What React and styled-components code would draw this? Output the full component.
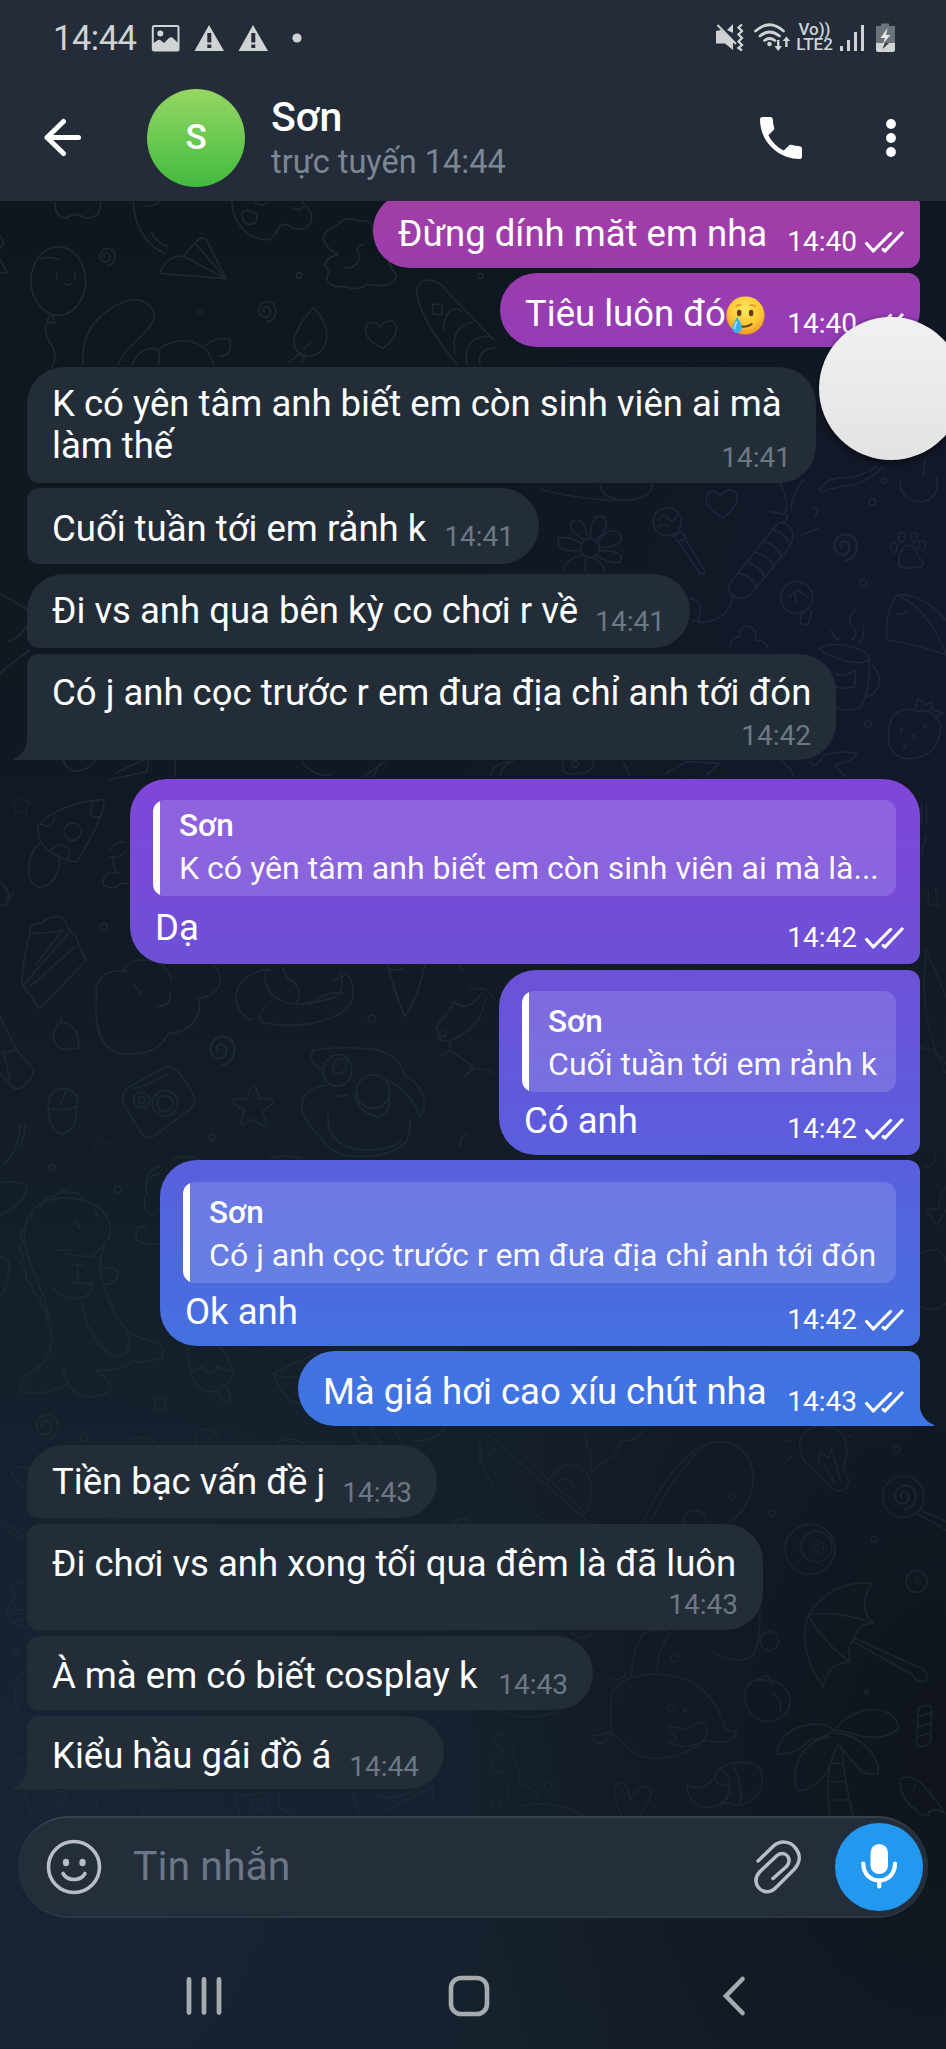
import React from "react";
import styled, { createGlobalStyle, css } from "styled-components";

const messages = [
  { id: 1, out: true, text: "Đừng dính măt em nha", time: "14:40", width: 547, height: 75, gap: -8, pad: 20, foot: 10, radius: "37px 12px 12px 37px" },
  { id: 2, out: true, text: "Tiêu luôn đó", emoji: true, time: "14:40", width: 420, height: 74, gap: 5, pad: 20, foot: 7, radius: "37px 12px 37px 37px" },
  { id: 3, text: "K có yên tâm anh biết em còn sinh viên ai mà làm thế", time: "14:41", width: 789, height: 116, gap: 20, pad: 16, foot: 9, radius: "37px 37px 37px 12px" },
  { id: 4, text: "Cuối tuần tới em rảnh k", time: "14:41", width: 512, height: 76, gap: 5, pad: 20, foot: 11, radius: "12px 38px 38px 12px" },
  { id: 5, text: "Đi vs anh qua bên kỳ co chơi r về", time: "14:41", width: 663, height: 74, gap: 10, pad: 16, foot: 10, radius: "37px 37px 37px 12px" },
  { id: 6, text: "Có j anh cọc trước r em đưa địa chỉ anh tới đón", time: "14:42", width: 809, height: 106, gap: 6, pad: 18, foot: 8, radius: "12px 37px 37px 0", tail: true },
  { id: 7, out: true, text: "Dạ", reply: "K có yên tâm anh biết em còn sinh viên ai mà là...", time: "14:42", width: 790, height: 185, gap: 19, pad: 11, foot: 10, radius: "37px 37px 12px 37px", replyTop: 21, replyHeight: 96, replyPad: 5 },
  { id: 8, out: true, text: "Có anh", reply: "Cuối tuần tới em rảnh k", time: "14:42", width: 421, height: 185, gap: 6, pad: 8, foot: 10, radius: "37px 12px 12px 37px", replyTop: 21, replyHeight: 101, replyPad: 10 },
  { id: 9, out: true, text: "Ok anh", reply: "Có j anh cọc trước r em đưa địa chỉ anh tới đón", time: "14:42", width: 760, height: 186, gap: 5, pad: 8, foot: 10, radius: "37px 12px 12px 37px", replyTop: 22, replyHeight: 101, replyPad: 10 },
  { id: 10, out: true, text: "Mà giá hơi cao xíu chút nha", time: "14:43", width: 622, height: 75, gap: 5, pad: 20, foot: 8, radius: "37px 12px 0 37px", tail: true },
  { id: 11, text: "Tiền bạc vấn đề j", time: "14:43", width: 410, height: 73, gap: 19, pad: 16, foot: 9, radius: "37px 37px 37px 12px" },
  { id: 12, text: "Đi chơi vs anh xong tối qua đêm là đã luôn", time: "14:43", width: 736, height: 106, gap: 6, pad: 19, foot: 9, radius: "12px 37px 37px 12px" },
  { id: 13, text: "À mà em có biết cosplay k", time: "14:43", width: 566, height: 74, gap: 6, pad: 19, foot: 9, radius: "12px 37px 37px 12px" },
  { id: 14, text: "Kiểu hầu gái đồ á", time: "14:44", width: 417, height: 73, gap: 6, pad: 19, foot: 6, radius: "12px 37px 37px 0", tail: true },
];

const Spiral = ({ x, y, r }) => (
  <path
    transform={`translate(${x} ${y}) scale(${r / 30})`}
    d="M-3 3C-12-3-4-14 5-11C18-6 15 14 1 17C-18 19-24-3-14-17C-2-33 25-28 29-5C31 14 19 28 4 30"
  />
);

const Heart = ({ x, y, s = 1 }) => (
  <path
    transform={`translate(${x} ${y}) scale(${s})`}
    d="M5 45C-25 30-50 10-46-15C-40-38-14-38-4-18C8-40 42-46 46-18C48 8 25 32 5 45Z"
  />
);

const Star = ({ x, y, s = 1 }) => (
  <path
    transform={`translate(${x} ${y}) scale(${s})`}
    d="M-8-60Q0-72 8-60L20-25L58-24Q68-20 58-8L30 15L42 55Q40 66 28 60L0 40L-32 58Q-42 60-38 46L-28 12L-60-8Q-68-22-55-24L-20-25Z"
  />
);

const Doodles = () => (
  <Wallpaper viewBox="0 201 946 1848" fill="none" stroke="#1d2932" strokeWidth="5" strokeLinecap="round" strokeLinejoin="round">
    {/* top strip */}
    <g transform="translate(0 196) scale(.3333)">
      <path d="M165 20Q165 68 200 65Q230 45 250 65Q302 72 302 20" />
      <path d="M400 20C403 90 440 150 495 172M435 30Q470 30 480 15M455 110Q470 140 500 150" />
      <path d="M480 232Q495 180 550 180L595 130Q605 120 620 133L678 248L480 232M550 180L678 248M588 145L678 248" />
      <ellipse cx="175" cy="255" rx="82" ry="103" />
      <path d="M150 358L140 380H165L158 358M137 385Q133 425 160 455Q172 490 155 512M170 232v18M225 228v22M190 262q15 10 25 0M120 190q30-12 55 0" />
      <Spiral x={318} y={182} r={28} />
      <Spiral x={797} y={345} r={32} />
      <path d="M695 15C700 90 755 138 810 130C840 112 825 85 860 85C900 115 940 95 935 55Q925 35 905 18" />
      <path d="M725 50Q745 35 770 55Q775 85 750 85Q725 85 725 50M765 20q25 15 35 0M880 35q20 15 30-5" />
      <path d="M970 130C975 90 1010 100 1020 78C1050 55 1070 80 1090 75Q1115 70 1120 110M970 130Q985 165 1015 175C960 190 975 215 990 225C960 260 1010 280 1030 270C1070 285 1090 275 1100 265Q1180 280 1190 240L1165 200M1035 215Q1070 220 1080 180Q1060 150 1090 145" />
      <path d="M250 505C240 420 290 345 380 315C440 300 470 340 460 375C440 420 375 450 355 505M395 505Q430 440 475 465Q480 490 475 505M475 462C520 420 620 420 640 505M615 450Q650 420 690 430Q700 480 655 482" />
      <path d="M940 335C995 390 990 450 950 475C900 500 865 450 890 410Q905 370 940 335M905 470L865 500M910 460L930 440M915 475L905 505" />
      <Heart x={1143} y={412} />
      <path d="M1370 505Q1260 370 1250 290C1250 240 1310 240 1345 290L1480 430M1298 325h28v30h-28zM1330 400Q1340 320 1385 345M1365 470Q1350 390 1420 378M1400 505Q1390 420 1470 420M1440 505Q1430 460 1490 455" />
      <path d="M0 120Q20 140 0 155M0 190L22 230H0" />
      <circle cx="600" cy="347" r="8" />
      <circle cx="897" cy="238" r="8" />
      <circle cx="1442" cy="240" r="8" />
    </g>

    {/* beside the incoming bubbles */}
    <g transform="translate(460 460) scale(.3333)" stroke="#1c2737">
      <Heart x={785} y={127} />
      <circle cx="622" cy="185" r="42" />
      <path d="M595 180q15-25 30-5t30-15M595 200q20-15 30 0M640 228L665 215L680 235L652 245ZM655 245L722 342Q735 348 733 330L675 236" />
      <circle cx="390" cy="265" r="28" />
      <path d="M375 240C310 210 330 165 365 185Q380 205 383 237M392 237C390 180 410 155 435 175Q450 205 405 243M412 250C440 200 480 205 485 235Q480 262 418 263M418 272C470 270 495 285 480 305Q450 315 410 285M402 292Q440 320 430 338M380 292Q370 330 380 340M366 285Q310 300 310 335M362 270C300 280 290 260 295 235Q320 225 368 252" />
      <path d="M810 370L945 200Q970 170 995 210Q1005 230 990 260L870 405Q840 425 815 405Q800 390 810 370M835 338Q880 350 890 385M860 308Q905 320 912 350M885 278Q930 288 938 318M910 245Q955 255 962 290M940 210Q980 220 988 255" />
      <path d="M818 408C810 470 750 500 695 480M690 415Q735 420 715 480" />
      <Spiral x={1150} y={260} r={42} />
      <path d="M1320 320Q1310 300 1325 270Q1345 240 1368 270Q1370 290 1390 305Q1390 325 1370 320Q1345 330 1320 320" />
      <ellipse cx="1302" cy="262" rx="10" ry="15" />
      <ellipse cx="1325" cy="232" rx="10" ry="15" />
      <ellipse cx="1362" cy="232" rx="10" ry="15" />
      <ellipse cx="1386" cy="256" rx="10" ry="15" />
      <circle cx="1010" cy="412" r="48" />
      <path d="M985 410L1015 390L1045 415M1005 400L1010 430M1025 460L1020 490L1045 495L1055 455" />
      <path d="M1458 480Q1380 395 1310 405Q1275 450 1280 540Q1380 555 1458 585M1310 405Q1400 440 1458 580M1310 460q15 12 30-5" />
      <path d="M1080 565Q1110 545 1170 560Q1230 575 1228 600Q1190 620 1120 590Q1085 580 1080 565M1228 600Q1230 700 1200 745Q1160 755 1130 745M1235 615Q1265 640 1255 680Q1240 710 1220 710M1125 640Q1150 655 1185 630V680Q1150 690 1125 680M1175 540Q1200 520 1175 495Q1160 470 1185 450M1115 510Q1120 535 1140 540M1210 500Q1215 530 1200 550" />
      <path d="M810 560Q815 530 840 530Q840 490 870 500Q895 515 885 540Q920 540 925 570" />
      <path d="M1290 790C1300 750 1340 740 1370 755C1420 740 1450 790 1440 820C1430 880 1380 900 1330 895C1280 880 1280 830 1290 790M1365 750L1375 715L1395 735L1415 725L1415 750L1450 760L1425 775" />
      <circle cx="1325" cy="810" r="4" /><circle cx="1360" cy="830" r="4" /><circle cx="1395" cy="800" r="4" /><circle cx="1335" cy="860" r="4" />
      <path d="M955 60Q990 120 975 160M1030 60Q990 110 995 150M930 155L985 165L970 195M1060 140l15 10l-10 20M1025 225l50-20M1080 90Q1090 60 1130 55Q1200 55 1250 20M1085 95Q1130 80 1180 75Q1230 60 1270 20M1320 60C1320 120 1370 135 1405 120Q1440 100 1430 50M1390 50l5-50M245 90Q420 130 520 118Q580 110 575 70M420 75q10 40 50 40" />
      <path d="M90 945Q100 910 150 905M120 945Q130 910 160 905M310 905Q300 950 340 940Q400 945 400 905M490 905l20 40M620 940L680 905L780 910L740 945M965 905Q1000 930 1000 950M1050 905Q1070 930 1090 885Q1150 870 1190 880Q1190 900 1125 915L1155 950M1385 1030V1090M1400 1030V1090M1400 1125L1385 1180" />
      <circle cx="345" cy="912" r="10" />
      <circle cx="1237" cy="126" r="10" />
      <circle cx="1272" cy="62" r="8" />
      <circle cx="1210" cy="367" r="10" />
      <circle cx="1224" cy="793" r="10" />
    </g>

    {/* left column, middle */}
    <g transform="translate(0 760) scale(.3333)">
      <path d="M0 300Q60 250 90 230M25 205Q60 190 80 160M0 60L50 90L95 115" transform="translate(0 -560)" />
      <path d="M190 0Q200 40 240 32Q280 20 285 0M325 60L440 35L445 5M345 40L430 0M525 0V50M905 5Q940 50 990 45M1090 50L1155 5M1120 50L1140 10" />
      <Star x={62} y={135} s={0.48} />
      <path d="M120 190Q180 130 310 118Q325 150 230 305Q210 310 150 275Q110 250 115 195M120 190Q155 215 165 170M280 125Q260 180 300 170M155 270Q180 240 210 270L205 300M120 248C75 290 75 370 115 382C165 380 180 330 178 290" />
      <circle cx="218" cy="215" r="26" />
      <path d="M330 270Q345 245 375 245M330 290Q355 300 380 270M340 290Q335 320 355 340Q305 330 310 375Q340 395 360 370H385M0 365Q30 390 25 420Q20 440 0 435M20 415L42 400" />
      <path d="M90 520Q85 490 125 490Q140 470 180 470Q200 480 205 510Q235 530 235 555L260 600L118 745L65 670Q70 590 90 520M90 520Q150 520 190 510M205 520L70 675M225 560L90 680M180 520L110 610" />
      <path d="M385 635C310 620 280 670 290 710C280 820 310 890 400 882C460 880 490 850 505 820C560 820 610 780 595 715C660 710 680 650 640 618M370 635Q380 600 430 600Q500 600 515 660M400 670L425 705M510 700Q515 740 465 740" />
      <path d="M745 650C690 680 700 760 755 780M745 650Q780 625 810 630M795 640C790 720 870 740 920 730C980 720 1050 720 1020 640M850 625Q860 660 880 665Q910 700 890 725M795 740Q760 790 800 790C900 810 1060 780 1060 700Q1060 650 1030 640M930 735Q980 690 1030 700M1000 660l30-10" />
      <path d="M1165 615Q1180 690 1215 770Q1250 720 1275 615M1165 625Q1190 635 1205 625M1380 620l10 15M1310 810C1310 780 1350 770 1360 725L1390 740Q1430 730 1440 705M1310 830Q1330 850 1355 840Q1420 810 1440 770M1350 850V870L1420 920L1395 950M1345 875L1318 890" />
      <circle cx="1328" cy="820" r="10" />
      <path d="M160 830Q165 780 195 790Q240 800 235 865Q165 880 160 830M180 790L185 772" />
      <Spiral x={660} y={870} r={45} />
      <Star x={760} y={1040} s={0.95} />
      <Star x={303} y={1155} s={0.45} />
      <path d="M380 985L490 925Q510 915 530 930Q575 980 585 1025Q580 1045 560 1055L460 1130Q440 1140 420 1115L370 1030Q365 1000 380 985M400 985L440 975Q470 960 500 945" />
      <circle cx="425" cy="1020" r="24" /><circle cx="425" cy="1020" r="10" />
      <circle cx="495" cy="1030" r="38" /><circle cx="495" cy="1030" r="24" />
      <path d="M145 1040C140 990 190 970 225 1000Q240 1030 228 1045Q235 1110 185 1122Q145 1110 145 1045Q190 1055 230 1040M200 990L180 1035" />
      <path d="M940 870Q1010 860 1090 865Q1200 870 1215 950Q1250 960 1265 1000Q1285 1050 1255 1070M940 870Q920 910 970 930C970 1000 1060 990 1055 925C1050 860 970 880 970 930M1000 920Q1005 890 1040 900Q1040 950 1000 940ZM975 975Q900 990 905 1050Q930 1110 970 1140Q1000 1190 1080 1190Q1170 1190 1220 1145Q1230 1110 1230 1080M985 1050Q970 1160 1090 1170Q1180 1170 1205 1140M1060 995Q1080 1070 1140 1070Q1180 1050 1165 1000M1160 960Q1230 990 1260 1070M1005 1010L1045 1005" />
      <circle cx="1120" cy="995" r="50" />
      <path d="M0 770L50 870L100 925Q100 960 60 985L40 985L0 940M10 870L30 960M0 880L45 870M60 1090Q60 1170 10 1215M75 1090Q75 1130 60 1160M440 1285Q430 1230 480 1220M520 1200Q550 1180 600 1200M810 1195Q850 1180 900 1195M1380 1160Q1380 1130 1400 1120M0 1270Q40 1260 80 1275Q80 1330 0 1365" />
      <circle cx="312" cy="500" r="10" /><circle cx="1116" cy="776" r="11" /><circle cx="635" cy="1133" r="9" /><circle cx="157" cy="1222" r="9" />
    </g>

    {/* dinosaur corner */}
    <g transform="translate(0 1150) scale(.3333)">
      <path d="M75 230C90 160 150 140 210 145C290 150 340 200 330 250C320 290 290 300 280 320Q230 320 195 310M170 300L210 300M75 230C60 330 150 420 155 570M330 260Q300 290 300 360C320 460 360 530 400 555L480 585Q495 600 485 625Q430 640 400 635Q360 665 290 660Q330 690 335 720Q300 745 250 740Q200 720 190 655M155 570Q150 640 85 670Q50 700 65 725Q130 740 195 705M245 455C260 560 320 620 360 620Q400 600 380 540" />
      <path d="M75 230q-25 20-5 45q-20 20 0 45q-15 25 10 45q-10 25 15 40q0 30 25 35q0 25 20 45q-5 25 10 40M95 200q0-30 30-35q5-30 40-25q20-25 45-10q30-10 40 20" />
      <path d="M218 345h35M233 345V400M218 400H275Q275 440 240 445Q180 450 160 415M300 360Q340 340 355 370Q345 410 310 400" />
      <path d="M230 215l8 22M285 180l8 18" strokeWidth="7" />
      <path d="M440 130Q430 80 480 70M440 130Q420 180 460 195M440 230Q400 220 410 270Q440 290 475 280M0 320Q35 320 25 370Q20 420 0 440" />
      <path d="M565 595C560 690 600 730 640 725C680 710 710 680 695 660Q690 620 660 592M580 665Q620 640 610 655Q640 690 650 650L690 665M650 725L670 755Q695 760 690 740L680 710" />
      <path d="M820 670L945 612M820 670Q850 750 890 760M820 670Q850 690 890 680M1060 830Q1060 880 1100 880M1110 830L1140 880M1180 840L1210 880M1240 870Q1310 880 1335 830M1440 870V940" />
      <Spiral x={135} y={830} r={40} />
      <path d="M380 880Q430 845 470 880M590 880C570 830 660 820 655 880M830 880Q870 855 910 880M35 960Q60 940 85 960M35 965Q40 1000 75 1005M0 1120L55 1170L65 1155L25 1125M320 1115Q340 1100 370 1115M1360 1120Q1390 1095 1420 1120M75 1300Q30 1290 35 1320Q60 1330 25 1370Q5 1420 90 1435M35 1380H75M25 1415L80 1405" />
      <circle cx="481" cy="762" r="17" /><circle cx="253" cy="862" r="12" /><circle cx="353" cy="118" r="10" /><circle cx="157" cy="52" r="9" />
      <path d="M80 1560Q20 1600 60 1690M50 1845L100 2020M110 1915L185 1925L205 1930L165 1990M35 1840Q50 1825 75 1825M300 1930Q280 1960 300 1995M310 1930l10 20M420 1980L480 1930M430 1960V2000M705 1930Q715 1980 720 2000M705 1935H760M840 1930L835 1970L880 1995M1060 1925Q1060 1970 1080 1990M1120 1930Q1170 1960 1240 1920M1140 1990L1300 1910V1960" />
      <circle cx="780" cy="1955" r="26" /><circle cx="780" cy="1955" r="12" /><circle cx="160" cy="1960" r="14" /><circle cx="50" cy="1508" r="8" />
    </g>

    {/* right column, lower half */}
    <g transform="translate(470 1150) scale(.3333)" stroke="#1a252e">
      <path d="M30 870Q20 1000 180 1120M50 850L350 1110M90 850L345 1090M25 880Q60 990 230 1120M230 1000Q270 930 330 950Q390 990 345 1090M260 1000Q290 970 310 1010M350 850Q340 880 360 900L365 970M365 970Q380 940 400 940Q450 910 450 870Q500 880 520 840" />
      <circle cx="62" cy="900" r="14" />
      <path d="M520 1115C590 960 680 870 760 875C850 890 870 990 830 1060Q810 1100 770 1120M545 1110Q600 990 680 910M640 1120Q640 1080 675 1082Q710 1085 710 1120" />
      <circle cx="787" cy="1040" r="10" />
      <path d="M1000 930C970 860 1010 825 1060 830Q1130 830 1130 900Q1130 930 1120 950L1138 1000Q1120 1035 1085 1015Q1050 980 1000 930M1045 940L1050 905L1075 925L1085 895L1110 990M1060 940L1095 1000M950 930l18-10M945 870l20 5M1130 860l20-5" />
      <circle cx="1300" cy="1040" r="62" /><Spiral x={1300} y={1040} r={38} />
      <path d="M1340 1090L1428 1140M1355 1080L1428 1115" />
      <circle cx="1020" cy="1198" r="75" /><circle cx="1040" cy="1190" r="46" /><Spiral x={1040} y={1192} r={22} />
      <circle cx="1340" cy="1295" r="32" /><Spiral x={1342} y={1293} r={12} />
      <circle cx="1280" cy="898" r="11" /><circle cx="905" cy="1090" r="9" /><circle cx="1212" cy="1168" r="9" />
      <path d="M1360 50Q1400 50 1395 10M1428 110Q1400 150 1410 175L1370 180M1370 180L1400 225L1428 180M1350 310Q1420 280 1428 340M1350 470Q1400 490 1428 460" />
      <path d="M1395-790l10 60l-30-10v-40M1370-600L1428-460M1370-600Q1340-400 1428-230M1345-310Q1400-300 1428-260M0-480Q50-500 75-450M30-400L50-460M0-240Q40-250 75-230" />
    </g>

    {/* umbrella, fish, palm tree */}
    <g transform="translate(470 1560) scale(.3333)" stroke="#1a252d">
      <path d="M1205 70Q1080 60 1015 165Q980 270 1060 380Q1070 310 1140 305Q1130 250 1155 235Q1160 190 1210 190Q1160 140 1205 70M1015 165Q1100 150 1210 190M1015 165Q1060 250 1140 305M1155 235L1330 315Q1380 330 1370 360Q1340 375 1330 345L1150 245" />
      <path d="M430 390C480 330 600 330 680 375Q750 430 765 510L800 515Q790 550 740 545Q720 540 700 545C640 590 540 620 480 570Q430 520 425 520L400 550Q370 550 360 525Q400 530 425 510Q415 440 430 390M485 345Q490 260 520 220Q560 200 600 220Q560 270 560 345M420 350Q450 370 470 340M595 500Q620 500 650 510Q690 480 705 490Q720 530 690 550Q620 570 595 545Q640 545 600 510" />
      <circle cx="604" cy="442" r="10" /><circle cx="645" cy="450" r="5" /><circle cx="615" cy="294" r="12" />
      <path d="M730 275Q800 320 850 285Q870 240 870 150M300 215Q340 250 365 220M90 450Q170 490 260 455" />
      <circle cx="898" cy="243" r="28" />
      <path d="M825 420C820 370 850 355 885 360C950 360 970 410 955 450C930 490 880 490 860 475Q830 460 825 420M835 370L890 345L910 375M905 400Q940 420 930 455" />
      <path d="M920 580C930 500 1040 470 1095 510Q1050 540 1020 540Q970 590 920 580M1095 510C1150 430 1280 430 1285 505Q1250 540 1180 530Q1130 515 1095 510M1095 520C1170 520 1230 590 1225 640Q1190 650 1165 625Q1130 580 1100 550M1080 530C1000 540 960 620 980 690Q1010 700 1060 650Q1080 620 1100 560M1100 560Q1060 640 1080 765M1115 560Q1125 680 1150 765M1080 665H1120M1078 720H1135M1080 610H1115" />
      <path d="M1345 445Q1360 430 1385 440L1382 545Q1365 570 1340 555ZM1343 470L1380 460M1343 500L1380 490M1343 530L1380 520M1290 660Q1310 640 1350 665Q1400 720 1425 760Q1390 740 1375 760L1380 800M1290 660Q1290 720 1340 750Q1350 770 1375 765M1325 690q10 5 10-15" />
      <path d="M75 550C50 530 90 520 110 525Q140 540 130 600Q160 640 145 675Q200 680 205 720M75 550Q110 570 90 590Q60 590 62 620Q70 640 105 640Q120 680 108 725M108 760Q200 700 340 765" />
      <circle cx="235" cy="677" r="11" /><circle cx="78" cy="732" r="16" />
      <path d="M455 765Q420 690 440 675Q470 650 480 720Q510 660 545 690Q540 730 510 765M650 675C655 760 740 760 785 700Q780 670 765 675Q740 680 735 650Q700 700 650 675M735 650C750 600 830 600 865 620C895 660 870 740 790 735Q760 720 750 740M790 615Q820 670 810 735M750 625Q800 660 765 720" />
      <circle cx="1190" cy="397" r="6" />
    </g>
  </Wallpaper>
);

const Ticks = () => (
  <svg width="39" height="22" viewBox="0 0 39 22" fill="none" stroke="#fff" strokeWidth="3.2" strokeLinecap="round" strokeLinejoin="round">
    <path d="M1.6 12.5L8.3 20L25.5 2.5" />
    <path d="M18.2 18.5L20 20L37 2" />
  </svg>
);

const TearEmoji = () => (
  <Emoji viewBox="0 0 38 38">
    <defs>
      <radialGradient id="face" cx="50%" cy="35%" r="65%">
        <stop offset="0" stopColor="#ffe95c" />
        <stop offset=".65" stopColor="#fcc632" />
        <stop offset="1" stopColor="#ee9426" />
      </radialGradient>
    </defs>
    <circle cx="19" cy="19" r="18.6" fill="url(#face)" />
    <path d="M9.5 10.5Q12 8 15 9M23 9Q26 8 29 10.5" fill="none" stroke="#e59a2b" strokeWidth="1.6" />
    <ellipse cx="12.8" cy="16.5" rx="2.2" ry="3.2" fill="#5f3c15" />
    <ellipse cx="24.5" cy="16.5" rx="2.2" ry="3.2" fill="#5f3c15" />
    <path d="M12 28.5Q18 32 25 27.5" fill="none" stroke="#6a4114" strokeWidth="2" strokeLinecap="round" />
    <path d="M11 20.5Q16 28 15.5 31.5Q14.5 36 10.5 36Q6.3 35.5 6 31.5Q6.5 27 11 20.5Z" fill="#37b4ea" />
    <path d="M10.5 25Q8 29 8.6 32" fill="none" stroke="#a9e6fb" strokeWidth="1.6" />
  </Emoji>
);

const Message = ({ item }) => (
  <Bubble $out={item.out} $width={item.width} $height={item.height} $gap={item.gap} $radius={item.radius}>
    <Content>
      {item.reply && (
        <Reply $top={item.replyTop} $height={item.replyHeight} $pad={item.replyPad}>
          <ReplyName>Sơn</ReplyName>
          <ReplyText>{item.reply}</ReplyText>
        </Reply>
      )}
      <Text $pad={item.pad}>
        {item.text}
        {item.emoji && <TearEmoji />}
      </Text>
    </Content>
    <Stamp $out={item.out} $foot={item.foot}>
      {item.time}
      {item.out && <Ticks />}
    </Stamp>
    {item.tail && (
      <Tail $out={item.out} viewBox="0 0 16 28">
        <path d="M16 0C16 14 12 22 1 27Q0 28 2 28H16Z" />
      </Tail>
    )}
  </Bubble>
);

const App = () => {
  return (
    <Screen>
      <GlobalStyle />
      <Doodles />
      <Header>
        <StatusBar>
          <Clock>14:44</Clock>
          <svg width="152" height="30" viewBox="151 22 152 30" fill="#cfd3d4">
            <path fillRule="evenodd" d="M154 24H177Q179.5 24 179.5 26.5V48Q179.5 50.5 177 50.5H154Q151.8 50.5 151.8 48V26.5Q151.8 24 154 24ZM153.8 26V42L158 39Q159.5 38.2 161 39.5L164 42L169 37Q171 35.4 173 37L177.5 41.5V26Z" />
            <circle cx="160.3" cy="32.5" r="3" />
            <path fillRule="evenodd" d="M209 24L224 50H194.5ZM207.3 32V41.5H211.3V32ZM207.3 43.5V47H211.3V43.5Z" />
            <path fillRule="evenodd" d="M253 24L268 50H238.5ZM251.3 32V41.5H255.3V32ZM251.3 43.5V47H255.3V43.5Z" />
            <circle cx="297" cy="37" r="4.6" />
          </svg>
          <Spacer />
          <svg width="78" height="32" viewBox="716 22 78 32" fill="#cfd3d4">
            <path d="M717 31L722 30L734 41V50L726 43.5H717ZM728 30L734 24V33Z" />
            <path d="M718.5 25L737 44" stroke="#cfd3d4" strokeWidth="2" />
            <path d="M743 24.5L739.5 27.5L743 31L739.5 34.5L743 38L739.5 41.5L743 45L739.5 48L743 50.5" fill="none" stroke="#cfd3d4" strokeWidth="2.3" />
            <g fill="none" stroke="#cfd3d4" strokeWidth="2.7" strokeLinecap="round">
              <path d="M756.5 31Q770.5 18.5 784.5 31M761 36Q770.5 28 780.5 36M765.5 40.5Q770.5 36.5 776 40.5" />
            </g>
            <circle cx="770.5" cy="44" r="2.3" />
            <path d="M778 40h2.4v6h2.6l-3.8 5l-3.8-5H778zM786.2 47h2.4v-6h2.6l-3.8-4.5l-3.8 4.5h2.6z" />
          </svg>
          <Volte>
            <span>Vo))</span>
            <span>LTE2</span>
          </Volte>
          <svg width="56" height="32" viewBox="839 22 56 32" fill="#cfd3d4">
            <rect x="840" y="46" width="3" height="5" />
            <rect x="847" y="40" width="3" height="11" />
            <rect x="854" y="32" width="3" height="19" />
            <rect x="861" y="25" width="3" height="26" />
            <path d="M881 23.5H889V26H895V43H876V26H881Z" fill="#6b7279" />
            <path d="M876 43H895V50Q895 52 893 52H878Q876 52 876 50Z" />
            <path d="M887.5 28L880.5 38H885L883 43.5L890.5 35H886Z" fill="#e6e8e9" />
            <path d="M884.8 43H889L882.5 49Z" fill="#30373f" />
          </svg>
        </StatusBar>
        <TitleBar>
          <svg width="38" height="40" viewBox="0 0 38 40" fill="none" stroke="#fff" strokeWidth="5" strokeLinecap="round" strokeLinejoin="round">
            <path d="M35.5 19.5H4M20.5 3.5L4 19.5L20.5 35.5" />
          </svg>
          <Avatar>S</Avatar>
          <Peer>
            <PeerName>Sơn</PeerName>
            <PeerStatus>trực tuyến 14:44</PeerStatus>
          </Peer>
          <svg width="56" height="56" viewBox="0 0 24 24" fill="#fff">
            <path d="M6.62 10.79c1.44 2.83 3.76 5.14 6.59 6.59l2.2-2.2c.27-.27.67-.36 1.02-.24 1.12.37 2.33.57 3.57.57.55 0 1 .45 1 1V20c0 .55-.45 1-1 1-9.39 0-17-7.61-17-17 0-.55.45-1 1-1h3.5c.55 0 1 .45 1 1 0 1.25.2 2.45.57 3.57.11.35.03.74-.25 1.02l-2.2 2.2z" />
          </svg>
          <MenuDots>
            <svg width="12" height="40" viewBox="0 0 12 40" fill="#fff">
              <circle cx="6" cy="6" r="4.9" />
              <circle cx="6" cy="20" r="4.9" />
              <circle cx="6" cy="34" r="4.9" />
            </svg>
          </MenuDots>
        </TitleBar>
      </Header>

      <Chat>
        {messages.map((item) => (
          <Message key={item.id} item={item} />
        ))}
      </Chat>

      <InputBar>
        <svg width="56" height="56" viewBox="0 0 56 56" fill="none" stroke="#b9bec6" strokeWidth="3.6" strokeLinecap="round">
          <circle cx="28" cy="28" r="25.5" />
          <path d="M17 34.5Q20.5 40.5 28 40.5T39 34.5" />
          <ellipse cx="20" cy="23.5" rx="3.2" ry="3.8" fill="#b9bec6" stroke="none" />
          <ellipse cx="36.5" cy="23.5" rx="3.2" ry="3.8" fill="#b9bec6" stroke="none" />
        </svg>
        <Placeholder>Tin nhắn</Placeholder>
        <svg width="50" height="56" viewBox="753 1839 50 56" fill="none" stroke="#b9bec6" strokeWidth="3.5" strokeLinecap="round" strokeLinejoin="round">
          <path d="M758 1861L773 1846.5C780 1840 790 1841 795 1847.5C801 1854.5 800.5 1862.5 794 1869.5L776.5 1887C770 1894 762.5 1892.5 758.5 1887.5C754.5 1882 755 1877 760 1871.5L777 1855.5C780.5 1852.5 785 1853 787.5 1856C790 1859.5 789.5 1863 786.5 1866.5L773 1878.5" />
        </svg>
        <MicButton>
          <svg width="40" height="48" viewBox="0 0 40 48">
            <rect x="11.5" y="1" width="17.5" height="30" rx="8.7" fill="#fff" />
            <path d="M4.3 20.5C4.3 43 36 43 36 20.5M20.2 38V43.5" fill="none" stroke="#fff" strokeWidth="4.2" strokeLinecap="round" />
          </svg>
        </MicButton>
      </InputBar>

      <NavBar>
        <svg width="40" height="42" viewBox="0 0 40 42" stroke="#a6abb0" strokeWidth="4.8" strokeLinecap="round">
          <path d="M5 4.5V37.5M20 4.5V37.5M35 4.5V37.5" />
        </svg>
        <svg width="42" height="42" viewBox="0 0 42 42" fill="none" stroke="#a6abb0" strokeWidth="4.6">
          <rect x="3" y="3" width="36" height="36" rx="10" />
        </svg>
        <svg width="24" height="42" viewBox="0 0 24 42" fill="none" stroke="#a6abb0" strokeWidth="4.6" strokeLinecap="round" strokeLinejoin="miter">
          <path d="M20.5 4L4 21L20.5 38" />
        </svg>
      </NavBar>
      <FloatingBall />
    </Screen>
  );
};

export default App;

const GlobalStyle = createGlobalStyle`
  body {
    margin: 0;
    background: #121a24;
  }

  svg {
    display: block;
    flex-shrink: 0;
  }
`;

const Screen = styled.div`
  position: relative;
  display: flex;
  flex-direction: column;
  width: 946px;
  height: 2049px;
  overflow: hidden;
  font-family: Roboto, "Noto Sans", sans-serif;
  color: #fff;
  background:
    radial-gradient(500px 560px at 946px 620px, #14182c 0%, rgba(20, 24, 44, 0) 100%),
    radial-gradient(480px 700px at 946px 1750px, #0f141c 0%, rgba(15, 20, 28, 0) 100%),
    radial-gradient(600px 700px at 60px 1850px, #162434 0%, rgba(22, 36, 52, 0) 100%),
    linear-gradient(#0f171e 200px, #101921 700px, #141e29 1300px, #15202b 2049px);
`;

const Wallpaper = styled.svg`
  position: absolute;
  left: 0;
  top: 201px;
  width: 946px;
  height: 1848px;
  clip-path: inset(0 0 233px 0);
`;

const Header = styled.div`
  position: relative;
  z-index: 1;
  box-sizing: border-box;
  height: 201px;
  flex-shrink: 0;
  background: #242c39;
`;

const StatusBar = styled.div`
  display: flex;
  align-items: center;
  height: 76px;
  padding: 0 51px 0 53px;
`;

const Clock = styled.div`
  width: 86px;
  margin-right: 12px;
  font-size: 34.5px;
  line-height: 40px;
  color: #cfd3d4;
  letter-spacing: -0.5px;
`;

const Spacer = styled.div`
  flex: 1;
`;

const Volte = styled.div`
  display: flex;
  flex-direction: column;
  align-items: center;
  width: 41px;
  margin: 0 4px 2px 1px;
  font-size: 17px;
  font-weight: 500;
  line-height: 15px;
  color: #cfd3d4;
`;

const TitleBar = styled.div`
  display: flex;
  align-items: center;
  height: 124px;
  padding: 0 49px 0 43px;
`;

const Avatar = styled.div`
  width: 98px;
  height: 98px;
  margin-left: 66px;
  border-radius: 50%;
  background: linear-gradient(#96d763, #42ba40);
  font-size: 35px;
  font-weight: 500;
  line-height: 98px;
  text-align: center;
`;

const Peer = styled.div`
  flex: 1;
  margin: 0 0 0 26px;
`;

const PeerName = styled.div`
  font-size: 41px;
  font-weight: 500;
  line-height: 44px;
`;

const PeerStatus = styled.div`
  padding-top: 3px;
  margin-bottom: -1px;
  font-size: 32.5px;
  line-height: 40px;
  color: #7b8794;
`;

const MenuDots = styled.div`
  margin-left: 76px;
`;

const Chat = styled.div`
  position: relative;
  box-sizing: border-box;
  display: flex;
  flex-direction: column;
  height: 1615px;
  flex-shrink: 0;
  padding: 0 26px 0 27px;
`;

const Bubble = styled.div`
  position: relative;
  box-sizing: border-box;
  display: grid;
  flex-shrink: 0;
  align-self: ${(props) => (props.$out ? "flex-end" : "flex-start")};
  width: ${(props) => props.$width}px;
  height: ${(props) => props.$height}px;
  margin-top: ${(props) => props.$gap}px;
  border-radius: ${(props) => props.$radius};
  background: #222d38;
  ${(props) =>
    props.$out &&
    css`
      background: linear-gradient(
          #a23da4 200px,
          #943cb6 345px,
          #8046d8 780px,
          #6e50d7 960px,
          #5b5edd 1145px,
          #4570df 1340px,
          #3d75e3 1426px
        )
        fixed;
    `}
`;

const Content = styled.div`
  grid-area: 1 / 1;
  padding: 0 24px 0 23px;
`;

const Text = styled.div`
  display: flex;
  padding: ${(props) => props.$pad}px 0 0 2px;
  font-size: 36.5px;
  line-height: 42px;
`;

const Emoji = styled.svg`
  width: 39px;
  height: 39px;
  margin-top: 3px;
`;

const Stamp = styled.div`
  grid-area: 1 / 1;
  align-self: end;
  justify-self: end;
  display: flex;
  align-items: center;
  gap: 8px;
  padding: 0 ${(props) => (props.$out ? 16 : 25)}px ${(props) => props.$foot}px 0;
  font-size: 28px;
  line-height: 32px;
  color: ${(props) => (props.$out ? "#fff" : "#6c7884")};
`;

const Reply = styled.div`
  box-sizing: border-box;
  height: ${(props) => props.$height}px;
  margin-top: ${(props) => props.$top}px;
  padding: ${(props) => props.$pad}px 0 0 26px;
  border-radius: 12px;
  background: linear-gradient(to right, #fff 7.5px, rgba(255, 255, 255, 0.14) 7.5px);
  font-size: 32.1px;
  line-height: 42px;
  white-space: nowrap;
`;

const ReplyName = styled.div`
  font-size: 31.5px;
  font-weight: 500;
`;

const ReplyText = styled.div`
  color: rgba(255, 255, 255, 0.97);
`;

const Tail = styled.svg`
  position: absolute;
  bottom: 0;
  width: 16px;
  height: 28px;
  fill: ${(props) => (props.$out ? "#3d75e3" : "#222d38")};
  ${(props) =>
    props.$out
      ? css`
          right: -15px;
          transform: scaleX(-1);
        `
      : css`
          left: -15px;
        `}
`;

const InputBar = styled.div`
  position: relative;
  box-sizing: border-box;
  display: flex;
  align-items: center;
  flex-shrink: 0;
  height: 102px;
  margin: 0 18px;
  padding: 0 5px 0 28px;
  border-top: 2px solid #36424d;
  border-bottom: 2px solid #2c3843;
  border-radius: 51px;
  background: #242d3a;
`;

const Placeholder = styled.div`
  flex: 1;
  margin: 0 0 2px 31px;
  font-size: 41px;
  line-height: 48px;
  color: #6b7686;
`;

const MicButton = styled.div`
  display: flex;
  align-items: center;
  justify-content: center;
  width: 88px;
  height: 88px;
  margin-left: 32px;
  border-radius: 50%;
  background: #2398ef;
`;

const NavBar = styled.div`
  display: grid;
  grid-template-columns: 264px 274px 24px;
  height: 42px;
  margin: 57px 0 0 184px;
`;

const FloatingBall = styled.div`
  position: absolute;
  z-index: 2;
  top: 317px;
  left: 819px;
  width: 144px;
  height: 143px;
  border-radius: 50%;
  background: linear-gradient(#f1f1f1, #e3e3e3);
  box-shadow: 0 2px 6px rgba(0, 0, 0, 0.6);
`;
